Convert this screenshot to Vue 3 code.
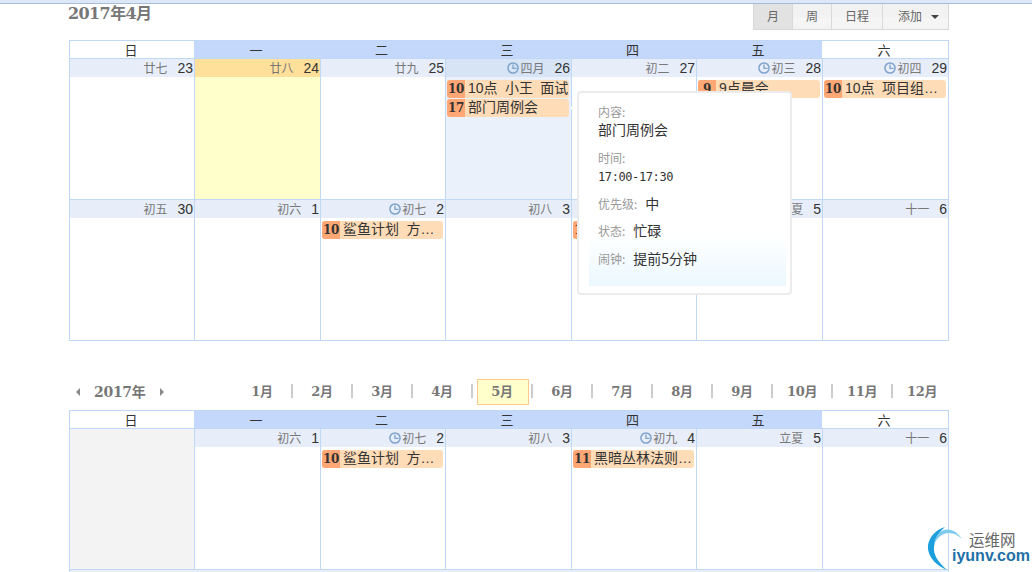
<script setup>
const heads = [
  { t: '日', on: false }, { t: '一', on: true }, { t: '二', on: true }, { t: '三', on: true },
  { t: '四', on: true }, { t: '五', on: true }, { t: '六', on: false }
]
const aprilWeeks = [
  [
    { lunar: '廿七', d: 23 },
    { lunar: '廿八', d: 24, today: true },
    { lunar: '廿九', d: 25 },
    { lunar: '四月', d: 26, clock: true, sel: true, events: [{ h: '10', t: '10点 小王 面试' }, { h: '17', t: '部门周例会' }] },
    { lunar: '初二', d: 27 },
    { lunar: '初三', d: 28, clock: true, events: [{ h: '9', t: '9点晨会' }] },
    { lunar: '初四', d: 29, clock: true, events: [{ h: '10', t: '10点 项目组例会' }] }
  ],
  [
    { lunar: '初五', d: 30 },
    { lunar: '初六', d: 1 },
    { lunar: '初七', d: 2, clock: true, events: [{ h: '10', t: '鲨鱼计划 方案讨论' }] },
    { lunar: '初八', d: 3 },
    { lunar: '初九', d: 4, clock: true, events: [{ h: '11', t: '黑暗丛林法则讨论' }] },
    { lunar: '立夏', d: 5 },
    { lunar: '十一', d: 6 }
  ]
]
const mayWeeks = [
  [
    { blank: true },
    { lunar: '初六', d: 1 },
    { lunar: '初七', d: 2, clock: true, events: [{ h: '10', t: '鲨鱼计划 方案讨论' }] },
    { lunar: '初八', d: 3 },
    { lunar: '初九', d: 4, clock: true, events: [{ h: '11', t: '黑暗丛林法则讨论' }] },
    { lunar: '立夏', d: 5 },
    { lunar: '十一', d: 6 }
  ]
]
const calendars = [
  { id: 'apr', weeks: aprilWeeks },
  { id: 'may', weeks: mayWeeks }
]
const months = ['1月', '2月', '3月', '4月', '5月', '6月', '7月', '8月', '9月', '10月', '11月', '12月']
</script>

<template>
  <div class="page">
    <div class="topline"></div>
    <div class="head">
      <h1 class="title">2017年4月</h1>
      <div class="views">
        <span class="view active">月</span>
        <span class="view">周</span>
        <span class="view wide">日程</span>
        <span class="view add">添加<i class="caret"></i></span>
      </div>
    </div>

    <template v-for="cal in calendars" :key="cal.id">
      <div v-if="cal.id === 'may'" class="nav">
        <div class="year">
          <i class="arrow left"></i>
          <span>2017年</span>
          <i class="arrow right"></i>
        </div>
        <div class="months">
          <template v-for="(m, i) in months" :key="m">
            <span class="month" :class="{ current: i === 4 }">{{ m }}</span>
          </template>
        </div>
      </div>
      <div class="calendar" :class="cal.id">
        <div class="weekdays">
          <div v-for="h in heads" :key="h.t" class="weekday" :class="{ on: h.on }">{{ h.t }}</div>
        </div>
        <div v-for="(week, w) in cal.weeks" :key="w" class="week">
          <div v-for="(c, i) in week" :key="i" class="cell" :class="{ blank: c.blank, today: c.today, sel: c.sel }">
            <div v-if="!c.blank" class="date">
              <svg v-if="c.clock" class="clock" viewBox="0 0 12 12" width="12" height="12">
                <circle cx="6" cy="6" r="5.1" fill="none" stroke="#7fa3cc" stroke-width="1.5" />
                <path d="M6 2.6V6.4H9.6" fill="none" stroke="#7fa3cc" stroke-width="1.3" />
              </svg>
              <span class="lunar">{{ c.lunar }}</span>
              <span class="num">{{ c.d }}</span>
            </div>
            <div v-for="e in c.events" :key="e.t" class="event">
              <b class="hour">{{ e.h }}</b>
              <span class="etext">{{ e.t }}</span>
            </div>
          </div>
        </div>
        <div v-if="cal.id === 'may'" class="nextrow"></div>
      </div>
    </template>

    <div class="tip">
      <i class="tip-arrow"></i>
      <div class="tip-glow"></div>
      <div class="tip-body">
        <div class="tl">内容:</div>
        <div class="tv">部门周例会</div>
        <div class="tl t2">时间:</div>
        <div class="tv time">17:00-17:30</div>
        <div class="tr r1"><span class="tl">优先级:</span><span class="tv">中</span></div>
        <div class="tr"><span class="tl">状态:</span><span class="tv">忙碌</span></div>
        <div class="tr"><span class="tl">闹钟:</span><span class="tv">提前5分钟</span></div>
      </div>
    </div>

    <div class="mark">
      <svg class="swirl" viewBox="0 0 40 47" width="40" height="47">
        <path d="M20 2C9 5 2 15 3 24C4 33 12 41 22 45C14 38 8 30 9 22C10 13 15 6 20 2Z" fill="#1c9fdc" />
        <path d="M37 14C31 5 22 1 14 8C11 11 9 16 9 20C12 12 18 8 24 8C29 8 33 10 37 14Z" fill="#7ccbee" />
      </svg>
      <span class="mcn">运维网</span>
      <span class="men">iyunv.com</span>
    </div>
  </div>
</template>

<style>
html, body { margin: 0; background: #fff; overflow: hidden; }
</style>

<style scoped>
.page {
  position: relative;
  width: 1032px;
  height: 572px;
  overflow: hidden;
  background: #fff;
  font-family: "Noto Sans CJK SC", sans-serif;
  color: #333;
}
.topline {
  height: 3px;
  background: #dce8f7;
  border-bottom: 1px solid #a9bdd6;
}
.head {
  display: flex;
  justify-content: space-between;
  align-items: flex-start;
  height: 36px;
  margin: 0 83px 0 68px;
}
.title {
  margin: 0;
  font: bold 16px/20px "DejaVu Serif", "Noto Sans CJK SC", serif;
  letter-spacing: -0.6px;
  color: #777;
}
.views {
  display: flex;
  height: 25px;
  border: 1px solid #d9d9d9;
  border-top: 0;
  background: linear-gradient(#f2f2f2, #f2f2f2 55%, #f6f6f6 56%, #f3f3f3);
  font-size: 12px;
  line-height: 24px;
  color: #666;
}
.view {
  width: 38px;
  text-align: center;
  border-right: 1px solid #d9d9d9;
}
.view.active { background: #e2e2e2; }
.view.wide { width: 50px; }
.view.add {
  width: 65px;
  border-right: 0;
  padding-left: 15px;
  box-sizing: border-box;
  text-align: left;
}
.caret {
  display: inline-block;
  width: 0;
  height: 0;
  margin-left: 9px;
  vertical-align: 2px;
  border: 4px solid transparent;
  border-top-color: #444;
  border-bottom: 0;
}
.calendar {
  width: 880px;
  margin-left: 69px;
  box-sizing: border-box;
  border: 1px solid #c0d8f5;
  border-width: 1px 1px 0 1px;
}
.weekdays, .week {
  display: grid;
  grid-template-columns: 124px 126px 125px 126px 125px 126px 126px;
}
.weekdays { height: 17px; }
.weekday {
  padding-right: 2px;
  font-size: 13px;
  line-height: 17px;
  text-align: center;
  color: #333;
}
.weekday.on { background: #c4d8fc; }
.week {
  height: 141px;
  box-sizing: border-box;
  border-top: 1px solid #c0d8f5;
}
.apr .week:last-of-type { border-bottom: 1px solid #c0d8f5; height: 142px; }
.cell {
  min-width: 0;
  border-left: 1px solid #c0d8f5;
}
.cell:first-child { border-left: 0; }
.cell.blank { background: #f3f3f3; }
.cell.today { background: #ffffcb; }
.cell.today .date { background: #ffe09b; }
.cell.sel { background: #ebf1fa; }
.cell.sel .date { background: #d6e4f6; }
.date {
  display: flex;
  align-items: center;
  justify-content: flex-end;
  height: 18px;
  padding-right: 1px;
  margin-bottom: 3px;
  background: #e7eef9;
}
.clock { margin-right: 1px; }
.lunar {
  margin-right: 10px;
  font-size: 12px;
  line-height: 18px;
  color: #777;
}
.num {
  font: 14px/18px "Liberation Sans", sans-serif;
  color: #333;
}
.event {
  display: flex;
  height: 18px;
  margin: 0 2px 1px 1px;
  border-radius: 3px;
  overflow: hidden;
  background: #ffdcb8;
}
.hour {
  flex: none;
  width: 18px;
  height: 18px;
  text-align: center;
  background: #ffa875;
  font: bold 12px/18px "DejaVu Serif", serif;
  letter-spacing: -0.4px;
  color: #333;
}
.etext {
  flex: 1;
  min-width: 0;
  height: 18px;
  padding: 0 0 0 3px;
  font-family: "Liberation Sans", "Noto Sans CJK SC", sans-serif;
  font-size: 14px;
  line-height: 16px;
  word-spacing: 3.5px;
  white-space: pre;
  overflow: hidden;
  text-overflow: ellipsis;
  color: #333;
}
.nav {
  display: flex;
  align-items: center;
  height: 27px;
  margin: 37px 0 5px 69px;
  font: bold 14px/26px "DejaVu Serif", "Noto Sans CJK SC", serif;
  color: #777;
}
.year {
  display: flex;
  align-items: center;
  width: 164px;
  flex: none;
  padding-left: 7px;
  box-sizing: border-box;
}
.year span { margin: 0 15px 0 14px; letter-spacing: -0.3px; }
.arrow {
  width: 0;
  height: 0;
  border: 4px solid transparent;
}
.arrow.left { border-right-color: #888; border-left: 0; }
.arrow.right { border-left-color: #888; border-right: 0; }
.months { display: flex; align-items: center; }
.month {
  position: relative;
  width: 60px;
  box-sizing: border-box;
  height: 26px;
  padding-right: 2px;
  text-align: center;
  font-size: 13px;
  letter-spacing: -0.3px;
}
.month::after {
  content: "";
  position: absolute;
  right: 0;
  top: 5px;
  width: 2px;
  height: 14px;
  background: #ccc;
}
.month:last-child::after { display: none; }
.month.current { z-index: 0; }
.month.current::before {
  content: "";
  position: absolute;
  left: 4px;
  right: 4px;
  top: 0;
  bottom: 0;
  z-index: -1;
  background: #ffffcb;
  border: 1px solid #fbc98e;
}
.tip {
  position: absolute;
  left: 577px;
  top: 91px;
  width: 215px;
  height: 204px;
  box-sizing: border-box;
  background: #fff;
  border: 2px solid #ececec;
  border-radius: 4px;
}
.tip-arrow {
  position: absolute;
  left: -9px;
  top: 9px;
  width: 0;
  height: 0;
  border: 6px solid transparent;
  border-right: 7px solid #fff;
  border-left: 0;
}
.tip-glow {
  position: absolute;
  left: 10px;
  right: 4px;
  bottom: 7px;
  height: 52px;
  background: linear-gradient(#fff, #ebf8fe);
}
.tip-body {
  position: relative;
  padding: 10px 0 0 19px;
}
.tl { color: #999; font-size: 12px; line-height: 18px; }
.tv { color: #333; font-size: 14px; line-height: 16px; padding-bottom: 2px; }
.t2 { margin-top: 10px; }
.time {
  margin-top: 1px;
  padding-bottom: 0;
  font: 12px/18px "DejaVu Sans Mono", monospace;
  letter-spacing: -0.4px;
}
.tr { display: flex; gap: 8px; align-items: center; height: 27.5px; }
.r1 { margin-top: 4px; }
.mark {
  position: absolute;
  left: 925px;
  top: 525px;
  width: 107px;
  height: 47px;
}
.swirl { position: absolute; left: 0; top: 0; }
.mcn {
  position: absolute;
  left: 44px;
  top: 4px;
  font-size: 15.5px;
  line-height: 20px;
  color: #666;
}
.men {
  position: absolute;
  left: 27px;
  top: 21px;
  font: bold 16px/20px "Liberation Sans", sans-serif;
  color: #1f6fa8;
}
.nextrow {
  height: 4px;
  border-top: 1px solid #c0d8f5;
  background: #e7eef9;
}
</style>
